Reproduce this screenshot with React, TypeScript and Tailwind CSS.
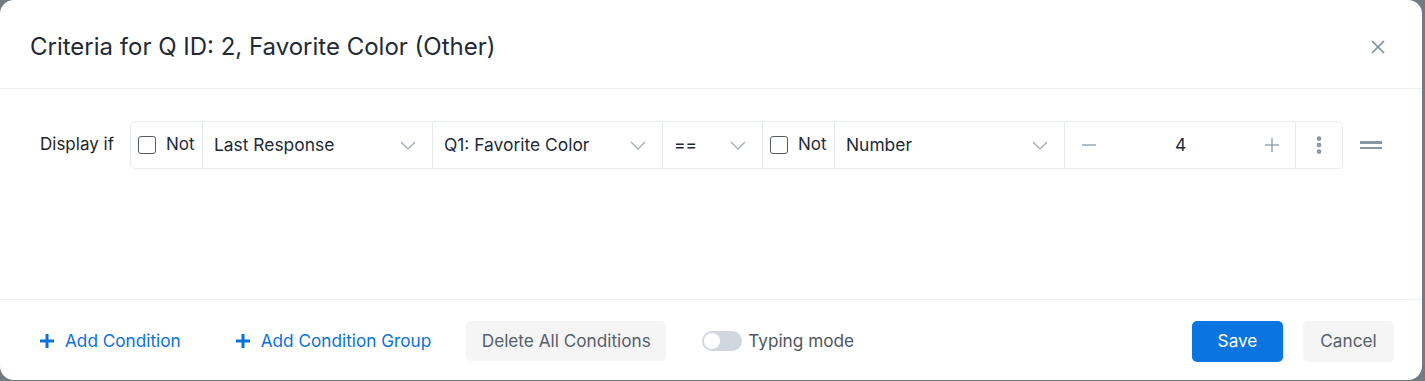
import { EllipsisVertical } from "lucide-react";

function Chevron() {
  return (
    <svg width="16" height="9" viewBox="0 0 16 9" className="text-[#9aa7b3]">
      <polyline points="1,1 8,8 15,1" fill="none" stroke="currentColor" strokeWidth="1.1" />
    </svg>
  );
}

function PlusMark({ size, stroke, className }: { size: number; stroke: number; className?: string }) {
  return (
    <svg width={size} height={size} viewBox={`0 0 ${size} ${size}`} className={className}>
      <line x1={size / 2} y1="0" x2={size / 2} y2={size} stroke="currentColor" strokeWidth={stroke} />
      <line x1="0" y1={size / 2} x2={size} y2={size / 2} stroke="currentColor" strokeWidth={stroke} />
    </svg>
  );
}

function Check({ label }: { label: string }) {
  return (
    <div className="flex w-[72px] shrink-0 items-center gap-[10px] border-r border-[#e6ebf0] pl-[7px]">
      <span className="h-[18px] w-[18px] rounded-[3px] border-[1.5px] border-[#555b63] bg-white" />
      <span className="text-[17px] text-[#1d2b3a]">{label}</span>
    </div>
  );
}

function Select({ value, width }: { value: string; width: string }) {
  return (
    <div className={`flex ${width} shrink-0 items-center justify-between border-r border-[#e6ebf0] pl-[11px] pr-[16px]`}>
      <span className="text-[17.4px] text-[#1d2b3a]">{value}</span>
      <Chevron />
    </div>
  );
}

export default function App() {
  return (
    <div className="h-[381px] w-[1425px] bg-[#737a81] font-['Inter',sans-serif]">
      <div className="flex h-[380px] w-[1422px] flex-col rounded-[14px] bg-white">
        <div className="flex h-[89px] shrink-0 items-center justify-between border-b border-[#eef0f3] pb-[-2px] pl-[30px] pr-[37px] pt-[6px]">
          <h2 className="text-[24px] text-[#222a33]">Criteria for Q ID: 2, Favorite Color (Other)</h2>
          <svg width="14" height="14" viewBox="0 0 14 14" className="text-[#7d909f]">
            <line x1="1" y1="1" x2="13" y2="13" stroke="currentColor" strokeWidth="1.7" />
            <line x1="13" y1="1" x2="1" y2="13" stroke="currentColor" strokeWidth="1.7" />
          </svg>
        </div>

        <div className="flex-1 pt-[32px]">
          <div className="flex items-center">
            <span className="w-[130px] shrink-0 pl-[40px] text-[17px] text-[#1f1f1f]">Display if</span>
            <div className="flex h-[48px] w-[1213px] rounded-[5px] border border-[#e6ebf0]">
              <Check label="Not" />
              <Select value="Last Response" width="w-[230px]" />
              <Select value="Q1: Favorite Color" width="w-[230px]" />
              <Select value="==" width="w-[100px]" />
              <Check label="Not" />
              <Select value="Number" width="w-[230px]" />
              <div className="flex w-[231px] shrink-0 items-center justify-between border-r border-[#e6ebf0] pl-[17px] pr-[16px]">
                <svg width="14" height="2" viewBox="0 0 14 2" className="text-[#8a9aa8]">
                  <line x1="0" y1="1" x2="14" y2="1" stroke="currentColor" strokeWidth="1.3" />
                </svg>
                <span className="text-[17.4px] text-[#1d2b3a]">4</span>
                <PlusMark size={14} stroke={1.3} className="text-[#8a9aa8]" />
              </div>
              <div className="flex flex-1 items-center justify-center">
                <EllipsisVertical className="h-[22px] w-[22px] text-[#7f919f]" strokeWidth={3} />
              </div>
            </div>
            <div className="ml-[17px] flex flex-col gap-[3px]">
              <span className="h-[2.5px] w-[22px] bg-[#8596a4]" />
              <span className="h-[2.5px] w-[22px] bg-[#8596a4]" />
            </div>
          </div>
        </div>

        <div className="flex h-[81px] shrink-0 items-center border-t border-[#eef0f3] pl-[40px] pr-[28px] pt-[2px]">
          <button className="flex items-center gap-[11px] text-[17.2px] text-[#0b72d6]">
            <PlusMark size={14} stroke={3} />
            Add Condition
          </button>
          <button className="ml-[55px] flex items-center gap-[11px] text-[17.2px] text-[#0b72d6]">
            <PlusMark size={14} stroke={3} />
            Add Condition Group
          </button>
          <button className="ml-[35px] h-[40px] w-[200px] rounded-[5px] bg-[#f5f5f5] text-[17.2px] text-[#55606b]">
            Delete All Conditions
          </button>
          <div className="ml-[36px] flex items-center gap-[6px]">
            <span className="flex h-[20px] w-[40px] items-center rounded-full bg-[#d0d7de] px-[2px]">
              <span className="h-[16px] w-[16px] rounded-full bg-white" />
            </span>
            <span className="text-[17.2px] text-[#50575e]">Typing mode</span>
          </div>
          <div className="ml-auto flex gap-[20px]">
            <button className="h-[41px] w-[91px] rounded-[5px] bg-[#0a75e0] text-[17.2px] text-white">Save</button>
            <button className="h-[41px] w-[91px] rounded-[5px] bg-[#f5f5f5] text-[17.2px] text-[#55606b]">Cancel</button>
          </div>
        </div>
      </div>
    </div>
  );
}
